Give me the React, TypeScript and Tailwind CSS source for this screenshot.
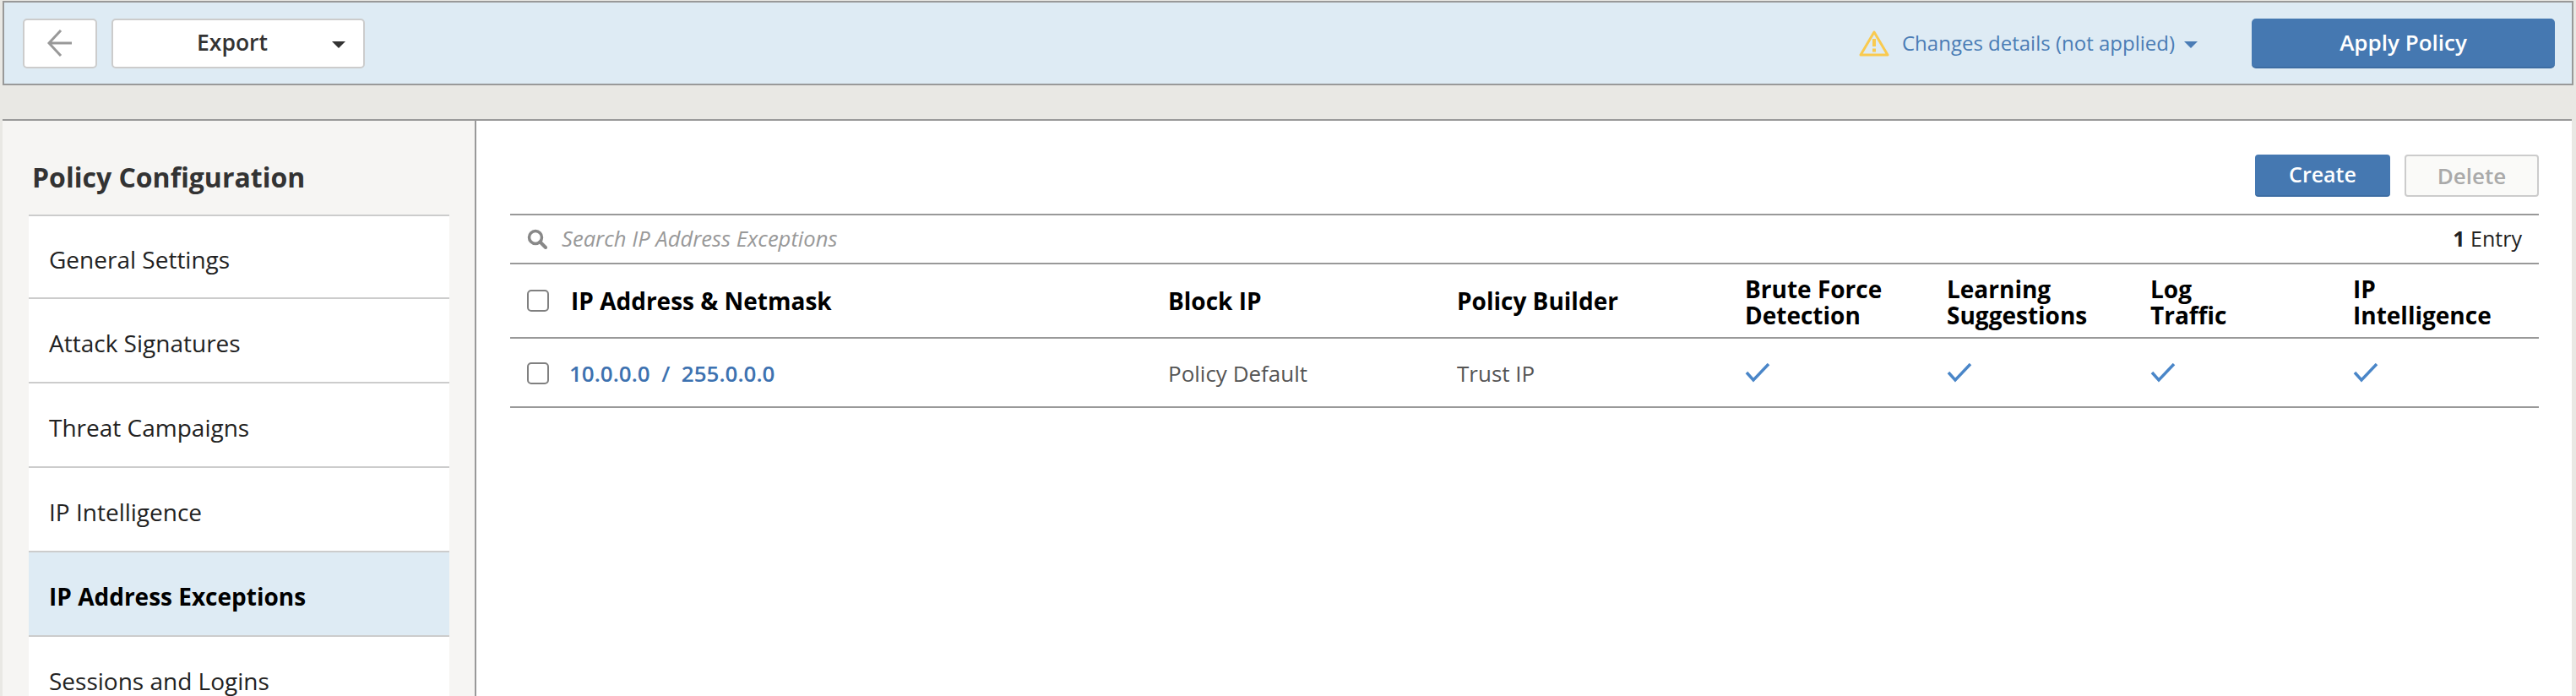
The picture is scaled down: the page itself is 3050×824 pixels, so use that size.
const font = { fontFamily: '"Open Sans", sans-serif' };

const navItems = [
  'General Settings',
  'Attack Signatures',
  'Threat Campaigns',
  'IP Intelligence',
  'IP Address Exceptions',
  'Sessions and Logins',
];

const cols = 'grid grid-cols-[779px_342px_341px_239px_241px_240px_1fr]';

function Check() {
  return (
    <svg width="30" height="24" viewBox="0 0 30 24" fill="none">
      <path d="M2 11 L10 20 L28 1" stroke="#4a86c8" strokeWidth="3.5" />
    </svg>
  );
}

function Box() {
  return <div className="w-[26px] h-[26px] rounded-[5px] border-2 border-[#808080] bg-white shrink-0" />;
}

export default function App() {
  return (
    <div className="w-[3050px] h-[824px] overflow-hidden bg-[#e9e8e4] text-[#333] pt-px" style={font}>
      <header className="mx-[3px] h-[100px] border-2 border-[#999] bg-[#deebf4] flex items-center pl-[22px] pr-[20px]">
        <button className="w-[88px] h-[59px] rounded-[5px] border-2 border-[#ccc] bg-white flex items-center justify-center">
          <svg width="30" height="32" viewBox="0 0 30 32" fill="none">
            <path d="M29 16 H3 M16 1 L2 16 L16 31" stroke="#999" strokeWidth="3" />
          </svg>
        </button>
        <button className="relative ml-[17px] w-[300px] h-[59px] rounded-[5px] border-2 border-[#ccc] bg-white text-[26.5px] font-semibold flex items-center justify-center pr-[14px]">
          Export
          <span className="absolute right-[21px] top-[25px] w-0 h-0 border-x-[8px] border-x-transparent border-t-[8px] border-t-[#333]" />
        </button>
        <div className="ml-auto flex items-center text-[#4a7cb5] text-[24px]">
          <svg width="36" height="32" viewBox="0 0 36 32" fill="none">
            <path d="M18 3 L34 30 H2 Z" stroke="#f9ca4f" strokeWidth="3" strokeLinejoin="round" />
            <path d="M18 11 V20" stroke="#f9ca4f" strokeWidth="4" />
            <path d="M18 22.5 V26.5" stroke="#f9ca4f" strokeWidth="4" />
          </svg>
          <span className="ml-[15px]">Changes details (not applied)</span>
          <span className="ml-[11px] mt-[4px] w-0 h-0 border-x-[8px] border-x-transparent border-t-[8px] border-t-[#4a7cb5]" />
        </div>
        <button className="ml-[64px] w-[359px] h-[59px] rounded-[5px] bg-[#4578b1] border-b-2 border-[#3d6da3] text-white text-[26px] font-semibold">
          Apply Policy
        </button>
      </header>

      <div className="mt-[40px] mr-[5px] ml-[3px] h-[700px] border-t-2 border-[#999] flex bg-white">
        <aside className="w-[561px] bg-[#f6f5f3] border-r-2 border-[#999] pl-[31px] pr-[30px] shrink-0">
          <h2 className="h-[111px] pt-[45px] pl-[4px] text-[32px] leading-[44px] font-bold whitespace-nowrap">Policy Configuration</h2>
          {navItems.map((item, i) => (
            <div
              key={item}
              className={
                item === 'IP Address Exceptions'
                  ? 'h-[100px] pt-[5px] border-t-2 border-[#ccc] bg-[#deebf4] pl-[24px] flex items-center text-[28px] font-bold text-black'
                  : i === 0
                    ? 'h-[98px] pt-[6px] border-t-2 border-[#ccc] bg-white pl-[24px] flex items-center text-[28px] text-[#222]'
                    : 'h-[100px] pt-[5px] border-t-2 border-[#ccc] bg-white pl-[24px] flex items-center text-[28px] text-[#222]'
              }
            >
              {item}
            </div>
          ))}
        </aside>

        <main className="flex-1 pl-[40px] pr-[39px] pt-[40px]">
          <div className="flex justify-end gap-[17px] h-[70px]">
            <button className="w-[160px] h-[50px] rounded-[4px] bg-[#4578b1] border-b-2 border-[#3d6da3] text-white text-[25px] font-semibold">Create</button>
            <button className="w-[159px] h-[50px] rounded-[4px] border-2 border-[#ccc] bg-[#fafaf8] text-[#aaa] text-[26px] font-semibold">Delete</button>
          </div>

          <div className="h-[60px] border-y-2 border-[#999] flex items-center pl-[20px] pr-[20px] text-[25.6px]">
            <svg width="24" height="24" viewBox="0 0 24 24" fill="none">
              <circle cx="10" cy="10" r="7.5" stroke="#888" strokeWidth="3.5" />
              <path d="M15.5 15.5 L22 22" stroke="#888" strokeWidth="4" strokeLinecap="round" />
            </svg>
            <span className="ml-[17px] italic text-[#999]">Search IP Address Exceptions</span>
            <span className="ml-auto text-[#222] text-[25px]"><b>1</b> Entry</span>
          </div>

          <div className={`${cols} h-[88px] border-b-2 border-[#999] items-center text-[28px] leading-[31px] font-bold text-black`}>
            <div className="flex items-center pl-[20px] gap-[26px]"><Box />IP Address &amp; Netmask</div>
            <div>Block IP</div>
            <div>Policy Builder</div>
            <div className="pt-[3px]">Brute Force<br />Detection</div>
            <div className="pt-[3px]">Learning<br />Suggestions</div>
            <div className="pt-[3px]">Log<br />Traffic</div>
            <div className="pt-[3px]">IP<br />Intelligence</div>
          </div>

          <div className={`${cols} h-[82px] pt-[2px] border-b-2 border-[#999] items-center text-[26px] text-[#555]`}>
            <div className="flex items-center pl-[20px] gap-[24px]">
              <Box />
              <span className="text-[#3d72b0] font-semibold whitespace-pre">10.0.0.0  /  255.0.0.0</span>
            </div>
            <div>Policy Default</div>
            <div>Trust IP</div>
            <div><Check /></div>
            <div><Check /></div>
            <div><Check /></div>
            <div><Check /></div>
          </div>
        </main>
      </div>
    </div>
  );
}
